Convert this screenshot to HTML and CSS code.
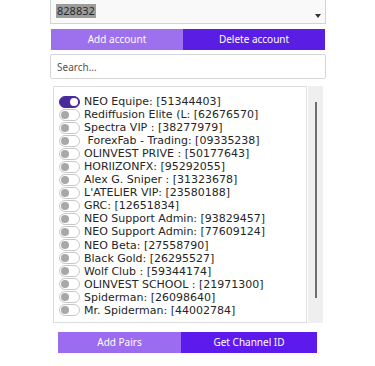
FILE: index.html
```html
<!DOCTYPE html>
<html lang="en">
<head>
    <meta charset="UTF-8">
    <meta name="viewport" content="width=device-width, initial-scale=1.0">
    <title>Channels</title>
    <link rel="stylesheet" href="styles.css">
</head>
<body>
    <main class="panel">
        <div class="account-select">
            <span class="selected-text">828832</span>
            <span class="arrow"></span>
        </div>

        <div class="button-row">
            <button class="btn light">Add account</button>
            <button class="btn dark">Delete account</button>
        </div>

        <input class="search" type="text" placeholder="Search...">

        <div class="channel-box">
            <ul class="channel-list">
                <li><span class="toggle on"></span>NEO Equipe: [51344403]</li>
                <li><span class="toggle"></span>Rediffusion Elite (L: [62676570]</li>
                <li><span class="toggle"></span>Spectra VIP : [38277979]</li>
                <li><span class="toggle"></span>&nbsp;ForexFab - Trading: [09335238]</li>
                <li><span class="toggle"></span>OLINVEST PRIVE : [50177643]</li>
                <li><span class="toggle"></span>HORIIZONFX: [95292055]</li>
                <li><span class="toggle"></span>Alex G. Sniper : [31323678]</li>
                <li><span class="toggle"></span>L'ATELIER VIP: [23580188]</li>
                <li><span class="toggle"></span>GRC: [12651834]</li>
                <li><span class="toggle"></span>NEO Support Admin: [93829457]</li>
                <li><span class="toggle"></span>NEO Support Admin: [77609124]</li>
                <li><span class="toggle"></span>NEO Beta: [27558790]</li>
                <li><span class="toggle"></span>Black Gold: [26295527]</li>
                <li><span class="toggle"></span>Wolf Club : [59344174]</li>
                <li><span class="toggle"></span>OLINVEST SCHOOL : [21971300]</li>
                <li><span class="toggle"></span>Spiderman: [26098640]</li>
                <li><span class="toggle"></span>Mr. Spiderman: [44002784]</li>
            </ul>
            <div class="scroll-track">
                <div class="scroll-thumb"></div>
            </div>
        </div>

        <div class="button-row bottom">
            <button class="btn light">Add Pairs</button>
            <button class="btn dark">Get Channel ID</button>
        </div>
    </main>
</body>
</html>
```

FILE: styles.css
```css
body {
    font-family: "Noto Sans", "Open Sans", sans-serif;
    margin: 0;
    padding: 0;
    background-color: #ffffff;
    color: #222;
}

.panel {
    width: 276px;
    margin-left: 50px;
    margin-top: -2px;
    display: flex;
    flex-direction: column;
}

.account-select {
    height: 23px;
    border: 1px solid #d4d4d4;
    background-color: #f9f9f9;
    display: flex;
    align-items: flex-end;
    justify-content: space-between;
    padding: 0 4px 1px 5px;
}

.selected-text {
    background-color: #9c9c9c;
    color: #2a2a2a;
    font-size: 11px;
    line-height: 14px;
    padding: 0 1px;
    margin-bottom: 4px;
}

.arrow {
    width: 0;
    height: 0;
    border-left: 3px solid transparent;
    border-right: 3px solid transparent;
    border-top: 4px solid #333;
    margin-bottom: 4px;
}

.button-row {
    display: flex;
    margin: 5px 1px 0 1px;
    height: 21px;
}

.btn {
    border: none;
    color: white;
    font-family: inherit;
    font-size: 10px;
    line-height: 21px;
    padding: 0;
    cursor: pointer;
}

.button-row .light {
    width: 132px;
    background-color: #9d70ee;
}

.button-row .dark {
    flex: 1;
    background-color: #5a1de3;
}

.search {
    margin-top: 4px;
    height: 25px;
    box-sizing: border-box;
    border: 1px solid #d6d6d6;
    border-radius: 2px;
    padding: 0 6px;
    font-family: inherit;
    font-size: 10px;
    color: #333;
    outline: none;
}

.search::placeholder {
    color: #555;
}

.channel-box {
    display: flex;
    margin: 7px 2px 0 3px;
    height: 237px;
}

.channel-list {
    list-style: none;
    margin: 0;
    padding: 8px 0 0 5px;
    width: 254px;
    box-sizing: border-box;
    border: 1px solid #dcdcdc;
    border-right-color: #e2e2e2;
    overflow: hidden;
}

.channel-list li {
    display: flex;
    align-items: center;
    height: 13.06px;
    font-family: "DejaVu Sans", "Noto Sans", sans-serif;
    font-size: 11px;
    line-height: 13px;
    color: #262626;
    white-space: nowrap;
}

.toggle {
    width: 19px;
    height: 10px;
    border: 1px solid #c8c8c8;
    border-radius: 6px;
    background-color: #fff;
    margin-right: 4px;
    position: relative;
    flex-shrink: 0;
}

.toggle::after {
    content: "";
    position: absolute;
    top: 1px;
    left: 1px;
    width: 8px;
    height: 8px;
    border-radius: 50%;
    background-color: #a8a8a8;
}

.toggle.on {
    background-color: #4a2a9c;
    border-color: #4a2a9c;
}

.toggle.on::after {
    left: auto;
    right: 1px;
    background-color: #fff;
}

.scroll-track {
    width: 15px;
    margin-left: 1px;
    background-color: #efefef;
    padding-top: 16px;
    display: flex;
    justify-content: center;
}

.scroll-thumb {
    width: 2px;
    height: 196px;
    background-color: #6e6e6e;
}

.button-row.bottom {
    margin: 9px 9px 0 8px;
}

.button-row.bottom .light {
    width: 123px;
    background-color: #9c6cf0;
}

.button-row.bottom .dark {
    background-color: #5c1aed;
}
```
